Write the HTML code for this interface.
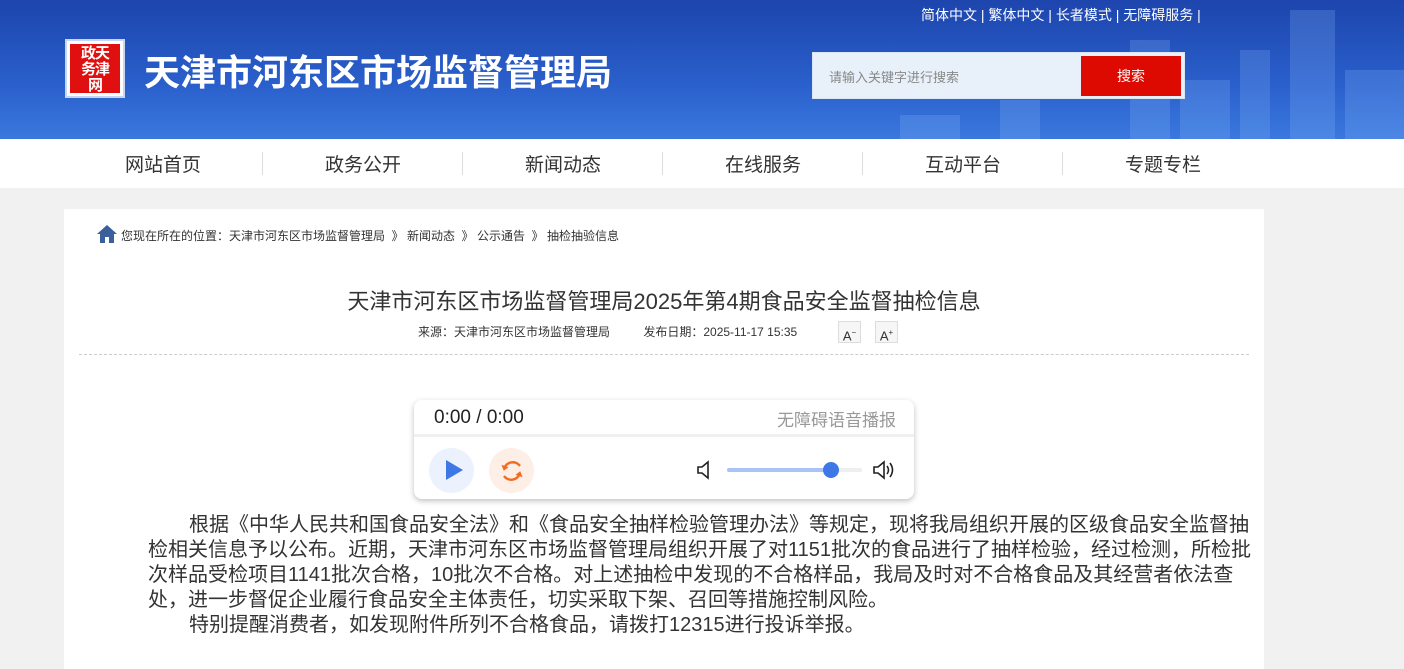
<!DOCTYPE html>
<html><head><meta charset="utf-8"><style>
*{margin:0;padding:0;box-sizing:border-box}
body{width:1404px;height:647px;overflow:hidden;background:#f1f1f1;font-family:"Liberation Sans","Noto Sans CJK SC",sans-serif;position:relative}
.hd{position:absolute;left:0;top:0;width:1404px;height:139px;background:linear-gradient(180deg,#1d45ad 0%,#2a5fcb 60%,#3a78de 100%);overflow:hidden}
.bld{position:absolute;background:rgba(140,190,255,.22)}
.logo{position:absolute;left:65px;top:39px;width:60px;height:59px;background:#fff;border:2px solid #c9d6f0}
.logo div{position:absolute;inset:3px;background:#e01010;color:#fff;font-size:15px;line-height:16px;padding-top:2px;font-weight:bold;text-align:center;letter-spacing:-1px;overflow:hidden}
.title{position:absolute;left:144px;top:44px;color:#fff;font-size:36px;font-weight:bold}
.top{position:absolute;left:921px;top:5px;color:#fff;font-size:14px}
.search{position:absolute;left:812px;top:52px;width:373px;height:47px;background:#e8f1fa;border:1px solid #dbe6f5}
.search span{position:absolute;left:16px;top:14px;font-size:13px;color:#888}
.search b{position:absolute;left:268px;top:3px;width:100px;height:40px;background:#dc0a00;color:#fff;font-weight:normal;font-size:14px;text-align:center;line-height:40px}
.nav{position:absolute;left:0;top:139px;width:1404px;height:49px;background:#fff}
.nav div{position:absolute;top:0;width:200px;height:49px;line-height:54px;text-align:center;font-size:19px;color:#333}
.nav i{position:absolute;top:13px;width:1px;height:23px;background:#ddd}
.card{position:absolute;left:64px;top:209px;width:1200px;height:460px;background:#fff}
.bc{position:absolute;left:57px;top:18px;font-size:12px;color:#333}
h1{position:absolute;left:0;width:1200px;top:75px;text-align:center;font-size:22px;font-weight:normal;color:#333}
.meta{position:absolute;left:354px;top:114px;font-size:12px;color:#333}
.ab{position:absolute;top:112px;width:23px;height:22px;border:1px solid #ddd;background:#f6f6f6;font-size:13px;text-align:center;line-height:22px;color:#333}
.dash{position:absolute;left:15px;top:145px;width:1170px;border-top:1px dashed #ccc}
.player{position:absolute;left:350px;top:191px;width:500px;height:99px;background:#fff;border-radius:8px;box-shadow:0 2px 6px rgba(0,0,0,.25)}
.txt{position:absolute;left:84px;top:304px;width:1114px;font-size:20px;line-height:25px;color:#333}
.txt p{text-indent:41px}
</style></head><body>
<div class="hd">
<div class="bld" style="left:1130px;top:40px;width:40px;height:99px"></div>
<div class="bld" style="left:1180px;top:80px;width:50px;height:59px"></div>
<div class="bld" style="left:1240px;top:50px;width:30px;height:89px"></div>
<div class="bld" style="left:1290px;top:10px;width:45px;height:129px"></div>
<div class="bld" style="left:1345px;top:70px;width:59px;height:69px"></div>
<div class="bld" style="left:900px;top:115px;width:60px;height:24px"></div>
<div class="bld" style="left:1000px;top:100px;width:40px;height:39px"></div>
<div class="logo"><div>政天<br>务津<br>网</div></div>
<div class="title">天津市河东区市场监督管理局</div>
<div class="top">简体中文 | 繁体中文 | 长者模式 | 无障碍服务 |</div>
<div class="search"><span>请输入关键字进行搜索</span><b>搜索</b></div>
</div>
<div class="nav">
<div style="left:63px">网站首页</div><i style="left:262px"></i>
<div style="left:263px">政务公开</div><i style="left:462px"></i>
<div style="left:463px">新闻动态</div><i style="left:662px"></i>
<div style="left:663px">在线服务</div><i style="left:862px"></i>
<div style="left:863px">互动平台</div><i style="left:1062px"></i>
<div style="left:1063px">专题专栏</div>
</div>
<div class="card">
<svg style="position:absolute;left:32px;top:15px" width="22" height="20" viewBox="0 0 22 20"><path d="M11 1 L1 10 L4 10 L4 19 L9 19 L9 13 L13 13 L13 19 L18 19 L18 10 L21 10 Z" fill="#3a5f9a"/></svg>
<div class="bc">您现在所在的位置：天津市河东区市场监督管理局 &nbsp;》 新闻动态 &nbsp;》 公示通告 &nbsp;》 抽检抽验信息</div>
<h1>天津市河东区市场监督管理局2025年第4期食品安全监督抽检信息</h1>
<div class="meta">来源：天津市河东区市场监督管理局 &nbsp; &nbsp; &nbsp; &nbsp; &nbsp;发布日期：2025-11-17 15:35</div>
<div class="ab" style="left:774px">A<sup style="font-size:8px">−</sup></div>
<div class="ab" style="left:811px">A<sup style="font-size:8px">+</sup></div>
<div class="dash"></div>
<div class="player">
<div style="position:absolute;left:20px;top:7px;font-size:19px;color:#222">0:00 / 0:00</div>
<div style="position:absolute;right:18px;top:6px;font-size:17px;color:#999">无障碍语音播报</div>
<div style="position:absolute;left:0;top:34px;width:500px;height:3px;background:#f0f0f0"></div>
<div style="position:absolute;left:15px;top:48px;width:45px;height:45px;border-radius:50%;background:#ebf1fd"></div>
<svg style="position:absolute;left:30px;top:59px" width="20" height="22"><path d="M2 1 L19 11 L2 21 Z" fill="#3e77e6"/></svg>
<div style="position:absolute;left:75px;top:48px;width:45px;height:45px;border-radius:50%;background:#fdeee6"></div>
<svg style="position:absolute;left:84px;top:57px" width="28" height="28" viewBox="0 0 28 28" fill="none" stroke="#f36d1f" stroke-width="2.5"><path d="M6 12 A9 9 0 0 1 22 9"/><path d="M22 16 A9 9 0 0 1 6 19"/><path d="M4 8 L6 13 L10 10" fill="#f36d1f" stroke-width="1"/><path d="M24 20 L22 15 L18 18" fill="#f36d1f" stroke-width="1"/></svg>
<svg style="position:absolute;left:282px;top:60px" width="16" height="20" fill="none" stroke="#222" stroke-width="1.6"><path d="M2 7 H6 L12 2 V18 L6 13 H2 Z"/></svg>
<div style="position:absolute;left:313px;top:68px;width:135px;height:4px;border-radius:2px;background:#eee"></div>
<div style="position:absolute;left:313px;top:68px;width:104px;height:4px;border-radius:2px;background:#a9c3f5"></div>
<div style="position:absolute;left:409px;top:62px;width:16px;height:16px;border-radius:50%;background:#3e77e6"></div>
<svg style="position:absolute;left:458px;top:59px" width="26" height="22" fill="none" stroke="#222" stroke-width="1.6"><path d="M2 8 H6 L12 3 V19 L6 14 H2 Z"/><path d="M15 7 Q18 11 15 15"/><path d="M18 4 Q23 11 18 18"/></svg>
</div>
<div class="txt"><p>根据《中华人民共和国食品安全法》和《食品安全抽样检验管理办法》等规定，现将我局组织开展的区级食品安全监督抽检相关信息予以公布。近期，天津市河东区市场监督管理局组织开展了对1151批次的食品进行了抽样检验，经过检测，所检批次样品受检项目1141批次合格，10批次不合格。对上述抽检中发现的不合格样品，我局及时对不合格食品及其经营者依法查处，进一步督促企业履行食品安全主体责任，切实采取下架、召回等措施控制风险。</p><p>特别提醒消费者，如发现附件所列不合格食品，请拨打12315进行投诉举报。</p></div>
</div>
</body></html>
